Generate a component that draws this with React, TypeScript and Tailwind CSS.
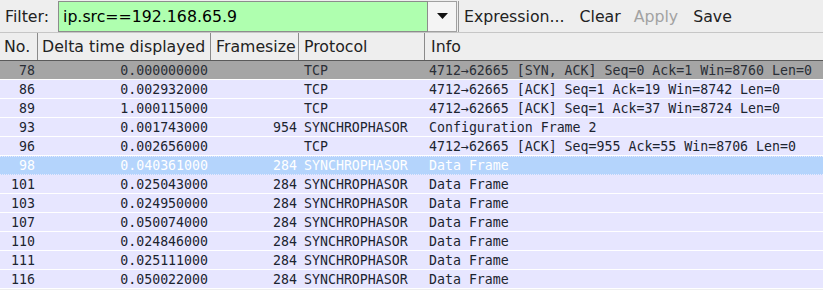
import React from "react";

type Row = { no: string; dt: string; size: string; proto: string; info: string; kind: "gray" | "tcp" | "sel" };

const rows: Row[] = [
  { no: "78", dt: "0.000000000", size: "", proto: "TCP", info: "4712\u219262665 [SYN, ACK] Seq=0 Ack=1 Win=8760 Len=0", kind: "gray" },
  { no: "86", dt: "0.002932000", size: "", proto: "TCP", info: "4712\u219262665 [ACK] Seq=1 Ack=19 Win=8742 Len=0", kind: "tcp" },
  { no: "89", dt: "1.000115000", size: "", proto: "TCP", info: "4712\u219262665 [ACK] Seq=1 Ack=37 Win=8724 Len=0", kind: "tcp" },
  { no: "93", dt: "0.001743000", size: "954", proto: "SYNCHROPHASOR", info: "Configuration Frame 2", kind: "tcp" },
  { no: "96", dt: "0.002656000", size: "", proto: "TCP", info: "4712\u219262665 [ACK] Seq=955 Ack=55 Win=8706 Len=0", kind: "tcp" },
  { no: "98", dt: "0.040361000", size: "284", proto: "SYNCHROPHASOR", info: "Data Frame", kind: "sel" },
  { no: "101", dt: "0.025043000", size: "284", proto: "SYNCHROPHASOR", info: "Data Frame", kind: "tcp" },
  { no: "103", dt: "0.024950000", size: "284", proto: "SYNCHROPHASOR", info: "Data Frame", kind: "tcp" },
  { no: "107", dt: "0.050074000", size: "284", proto: "SYNCHROPHASOR", info: "Data Frame", kind: "tcp" },
  { no: "110", dt: "0.024846000", size: "284", proto: "SYNCHROPHASOR", info: "Data Frame", kind: "tcp" },
  { no: "111", dt: "0.025111000", size: "284", proto: "SYNCHROPHASOR", info: "Data Frame", kind: "tcp" },
  { no: "116", dt: "0.050022000", size: "284", proto: "SYNCHROPHASOR", info: "Data Frame", kind: "tcp" },
];

export default function App() {
  return (
    <div className="w-[823px] h-[290px] overflow-hidden bg-[#eeeeee] font-['DejaVu_Sans',sans-serif]">
      {/* Filter toolbar */}
      <div className="h-[33px] flex items-center border-b border-[#c6c6c6] text-[15.75px] text-[#222]">
        <span className="pl-[5px] w-[58px] pt-[1px]">Filter:</span>
        <div className="h-[31px] w-[370px] bg-[#afffaf] border border-[#8c8c8c] flex items-center pl-[4px] pt-[1px] text-black">
          ip.src==192.168.65.9
        </div>
        <div className="h-[31px] w-[29px] bg-[#f4f4f4] border border-l-0 border-[#a0a0a0] flex items-center justify-center">
          <svg width="11" height="6" viewBox="0 0 11 6">
            <polygon points="0,0 11,0 5.5,6" fill="#111" />
          </svg>
        </div>
        <div className="h-[31px] w-px bg-[#9a9a9a] ml-[1px]" />
        <span className="ml-[5px] pt-[1px]">Expression...</span>
        <span className="ml-[15px] pt-[1px]">Clear</span>
        <span className="ml-[13px] pt-[1px] text-[#a2a2a2]">Apply</span>
        <span className="ml-[15px] pt-[1px]">Save</span>
      </div>
      {/* Header */}
      <div className="h-[28px] flex items-center border-b border-[#5a5a5a] text-[15.75px] text-[#222]">
        <div className="w-[38px] h-full flex items-center pl-[4px] pt-[1px] border-r border-[#8a8a8a]">No.</div>
        <div className="w-[173px] h-full flex items-center pl-[4px] pt-[1px] border-r border-[#8a8a8a]">Delta time displayed</div>
        <div className="w-[88px] h-full flex items-center pl-[5px] pt-[1px] border-r border-[#8a8a8a]">Framesize</div>
        <div className="w-[126px] h-full flex items-center pl-[5px] pt-[1px] border-r border-[#8a8a8a]">Protocol</div>
        <div className="flex-1 h-full flex items-center pl-[6px] pt-[1px]">Info</div>
      </div>
      {/* Rows */}
      <div className="font-['DejaVu_Sans_Mono',monospace] text-[13.25px]">
        {rows.map((r) => {
          const cls =
            r.kind === "gray"
              ? "bg-[#a5a5a5] text-[#2a2e36] border-b border-b-white"
              : r.kind === "sel"
              ? "bg-[#b4d4fc] text-white border-y border-dotted border-[#e8e8ff]"
              : "bg-[#e7e6ff] text-[#1c2430] border-b border-b-white";
          return (
            <div key={r.no} className={`h-[19px] flex items-center whitespace-nowrap pt-[1px] ${cls}`}>
              <div className="w-[35px] text-right">{r.no}</div>
              <div className="w-[173px] text-right">{r.dt}</div>
              <div className="w-[89px] text-right">{r.size}</div>
              <div className="w-[129px] pl-[7px] overflow-hidden">{r.proto}</div>
              <div className="flex-1 pl-[3px] overflow-hidden">{r.info}</div>
            </div>
          );
        })}
      </div>
    </div>
  );
}
